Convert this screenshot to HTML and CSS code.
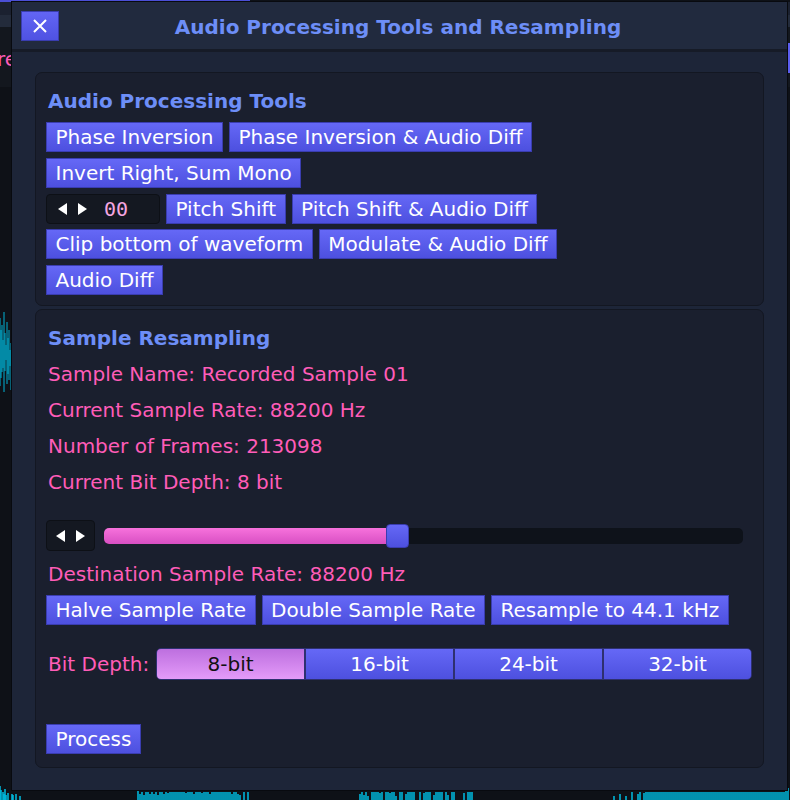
FILE: index.html
```html
<!DOCTYPE html>
<html>
<head>
<meta charset="utf-8">
<link rel="stylesheet" href="styles.css">
</head>
<body>
<div class="backdrop">
  <div class="bd-topline"></div>
  <div class="bd-strip1"></div>
  <div class="bd-strip2"></div>
  <div class="bd-head"><span class="bd-text">re</span></div>
  <div class="bd-side-btn"></div>
  <svg class="bd-wave" width="790" height="800" viewBox="0 0 790 800">
    <path d="M0 318V386 M1 330V378 M2 325V372 M3 340V368 M4 312V392 M5 333V371 M6 345V360 M7 322V384 M8 338V374 M9 330V380 M10 350V366 M11 343V390" stroke="#00b3d6" stroke-width="1"/>
    <path d="M0 786V800 M1 790V800 M3 792V800 M4 794V800 M5 789V800 M6 795V800 M8 793V800 M12 794V800 M13 795V800 M16 794V800 M20 796V800 M138 791V800 M140 794V800 M142 792V800 M144 795V800 M146 792V800 M148 792V800 M150 794V800 M152 792V800 M154 794V800 M156 792V800 M158 795V800 M160 792V800 M162 792V800 M164 794V800 M166 792V800 M168 793V800 M170 792V800 M172 792V800 M174 792V800 M176 792V800 M178 792V800 M180 792V800 M182 792V800 M184 792V800 M186 793V800 M188 792V800 M190 792V800 M192 792V800 M194 794V800 M196 792V800 M198 792V800 M200 792V800 M202 793V800 M204 792V800 M206 792V800 M208 792V800 M210 794V800 M212 792V800 M214 792V800 M216 792V800 M218 792V800 M220 792V800 M222 792V800 M224 792V800 M226 792V800 M228 792V800 M230 792V800 M232 794V800 M234 792V800 M236 792V800 M238 794V800 M240 795V800 M244 792V800 M248 792V800 M360 794V800 M362 792V800 M364 795V800 M366 792V800 M368 796V800 M372 792V800 M374 792V800 M376 792V800 M378 792V800 M380 793V800 M382 792V800 M386 792V800 M388 792V800 M390 793V800 M392 792V800 M394 792V800 M396 796V800 M400 792V800 M402 792V800 M406 794V800 M408 792V800 M410 792V800 M412 792V800 M414 792V800 M420 792V800 M424 793V800 M426 792V800 M428 792V800 M430 792V800 M434 795V800 M436 792V800 M438 792V800 M440 792V800 M442 792V800 M446 792V800 M448 795V800 M452 792V800 M454 792V800 M464 793V800 M468 792V800 M470 792V800 M472 792V800 M614 796V800 M620 794V800 M626 796V800 M632 792V800 M638 794V800 M640 792V800 M644 793V800 M646 792V800 M648 792V800 M650 792V800 M652 792V800 M654 792V800 M656 792V800 M658 792V800 M660 792V800 M662 792V800 M664 792V800 M666 792V800 M668 792V800 M670 792V800 M672 792V800 M674 792V800 M676 792V800 M678 792V800 M680 792V800 M682 792V800 M684 792V800 M686 792V800 M688 792V800 M690 792V800 M692 792V800 M694 792V800 M696 792V800 M698 792V800 M700 792V800 M702 792V800 M704 792V800 M706 792V800 M708 792V800 M710 792V800 M712 792V800 M714 792V800 M716 792V800 M718 792V800 M720 792V800 M722 792V800 M724 792V800 M726 792V800 M728 792V800 M730 792V800 M732 792V800 M734 792V800 M736 792V800 M738 792V800 M740 792V800 M742 792V800 M744 792V800 M746 792V800 M748 792V800 M750 792V800 M752 792V800 M754 792V800 M756 792V800 M758 792V800 M760 792V800 M762 792V800 M764 792V800 M766 792V800 M768 792V800 M770 792V800 M772 792V800 M774 792V800 M776 792V800 M778 792V800 M780 792V800 M782 792V800 M784 792V800 M786 790V800 M788 788V800" stroke="#00b3d6" stroke-width="1.6"/>
  </svg>
</div>

<div class="window">
  <div class="titlebar">
    <button class="close" aria-label="Close">
      <svg width="16" height="16" viewBox="0 0 16 16"><path d="M2 2L14 14M14 2L2 14" stroke="#fff" stroke-width="2" fill="none"/></svg>
    </button>
    <div class="title">Audio Processing Tools and Resampling</div>
  </div>
  <div class="wbody">
    <section class="panel tools">
      <h2 class="heading">Audio Processing Tools</h2>
      <div class="rows">
        <div class="row"><button class="btn">Phase Inversion</button><button class="btn">Phase Inversion &amp; Audio Diff</button></div>
        <div class="row"><button class="btn">Invert Right, Sum Mono</button></div>
        <div class="row">
          <div class="numbox">
            <span class="arrows"><span class="tri-l"></span><span class="tri-r"></span></span>
            <span class="num">00</span>
          </div>
          <button class="btn">Pitch Shift</button><button class="btn">Pitch Shift &amp; Audio Diff</button>
        </div>
        <div class="row"><button class="btn">Clip bottom of waveform</button><button class="btn">Modulate &amp; Audio Diff</button></div>
        <div class="row"><button class="btn">Audio Diff</button></div>
      </div>
    </section>
    <section class="panel resample">
      <h2 class="heading line">Sample Resampling</h2>
      <p class="info line">Sample Name: Recorded Sample 01</p>
      <p class="info line">Current Sample Rate: 88200 Hz</p>
      <p class="info line">Number of Frames: 213098</p>
      <p class="info line">Current Bit Depth: 8 bit</p>
      <div class="slider-row">
        <div class="arrowbox"><span class="tri-l"></span><span class="tri-r"></span></div>
        <div class="track">
          <div class="fill" style="width: 45.9%"></div>
          <div class="thumb" style="left: 45.9%"></div>
        </div>
      </div>
      <p class="info line dest">Destination Sample Rate: 88200 Hz</p>
      <div class="row"><button class="btn">Halve Sample Rate</button><button class="btn">Double Sample Rate</button><button class="btn">Resample to 44.1 kHz</button></div>
      <div class="bitrow">
        <span class="info">Bit Depth:</span>
        <div class="seg">
          <button class="seg-item active">8-bit</button>
          <button class="seg-item">16-bit</button>
          <button class="seg-item">24-bit</button>
          <button class="seg-item">32-bit</button>
        </div>
      </div>
      <div class="row process-row"><button class="btn">Process</button></div>
    </section>
  </div>
</div>
</body>
</html>
```

FILE: styles.css
```css
* { box-sizing: border-box; }
html, body { margin: 0; padding: 0; }
body {
  width: 790px;
  height: 800px;
  background: #0e1117;
  font-family: "DejaVu Sans", sans-serif;
  position: relative;
  overflow: hidden;
}

/* backdrop app (behind modal) */
.backdrop { position: absolute; inset: 0; }
.bd-topline { height: 2px; width: 250px; background: #4b4fd6; }
.bd-strip1 { height: 13px; background: #1b2130; }
.bd-strip2 { height: 12px; background: #232b3b; }
.bd-head {
  height: 60px;
  background: #13171e;
  padding-top: 20px;
}
.bd-text { color: #ff5cb8; font-size: 20px; margin-left: -3px; }
.bd-side-btn {
  position: absolute;
  right: 0; top: 43px;
  width: 6px; height: 30px;
  background: #5b5ef0;
}
.bd-wave { position: absolute; left: 0; top: 0; }

/* modal window */
.window {
  position: absolute;
  left: 11px; top: 1px;
  width: 777px; height: 790px;
  border: 1px solid #080a0f;
  background: #1d2538;
  display: flex;
  flex-direction: column;
}
.titlebar {
  height: 50px;
  flex: none;
  background: #212a3e;
  border-bottom: 3px solid #161b27;
  display: grid;
  grid-template-columns: 1fr auto 1fr;
  align-items: center;
  padding-left: 9px;
}
.close {
  justify-self: start;
  width: 38px; height: 30px;
  border: 1px solid #3a3db0;
  background: linear-gradient(#6265f4, #4f52e2);
  display: flex; align-items: center; justify-content: center;
  padding: 0;
}
.title {
  color: #6d8ef7;
  font-weight: bold;
  font-size: 20px;
  margin-top: 2px;
  margin-left: -12px;
}
.wbody {
  flex: 1;
  padding: 20px 23px 22px 23px;
  display: flex;
  flex-direction: column;
  gap: 3px;
}
.panel {
  background: #1a1f2e;
  border: 1px solid #131722;
  border-radius: 7px;
  padding: 0 10px;
}
.heading {
  margin: 0;
  color: #6d8ef7;
  font-size: 20px;
  font-weight: bold;
  padding-left: 2px;
}
.tools { padding-top: 16px; padding-bottom: 10px; }
.tools .heading { line-height: 24px; margin-bottom: 9px; }
.rows { display: flex; flex-direction: column; gap: 5.75px; }
.row { display: flex; gap: 6px; }
.btn {
  height: 30px;
  padding: 0 8.5px;
  border: 1px solid #3a3db0;
  background: linear-gradient(#6568f6, #4d50df);
  color: #fff;
  font-family: "DejaVu Sans", sans-serif;
  font-size: 20px;
  line-height: 28px;
  white-space: nowrap;
}
.numbox {
  width: 114px; height: 30px;
  background: #141821;
  border: 1px solid #0d1016;
  border-radius: 4px;
  display: flex; align-items: center;
  padding-left: 11px;
}
.arrows { display: flex; gap: 11px; align-items: center; }
.tri-l, .tri-r { width: 0; height: 0; border-top: 6px solid transparent; border-bottom: 6px solid transparent; }
.tri-l { border-right: 9px solid #fff; }
.tri-r { border-left: 9px solid #fff; }
.num {
  margin-left: 17px;
  color: #f4a6e0;
  font-family: "DejaVu Sans Mono", monospace;
  font-size: 20px;
}

.resample { flex: 1; padding-top: 10px; display: flex; flex-direction: column; }
.line { line-height: 36px; margin: 0; }
.info {
  margin: 0;
  color: #ff5cb8;
  font-size: 20px;
  padding-left: 2px;
}
.slider-row {
  display: flex; align-items: center;
  margin-top: 20px;
  gap: 9px;
  padding-right: 10px;
}
.arrowbox {
  width: 49px; height: 31px;
  background: #141821;
  border: 1px solid #0d1016;
  border-radius: 4px;
  display: flex; align-items: center; justify-content: center; gap: 11px;
}
.track {
  flex: 1;
  height: 16px;
  background: #0e121a;
  border-radius: 5px;
  position: relative;
}
.fill {
  height: 16px;
  border-radius: 5px 0 0 5px;
  background: linear-gradient(#f772dc, #d84fc3);
}
.thumb {
  position: absolute;
  top: -4px;
  width: 23px; height: 24px;
  margin-left: -11px;
  border-radius: 4px;
  border: 1px solid #3a3db0;
  background: linear-gradient(#6568f6, #4d50df);
}
.dest { margin-top: 5px; }
.resample > .row { margin-top: 3px; }
.bitrow {
  display: flex; align-items: center;
  margin-top: 23px;
  gap: 7px;
  padding-right: 1px;
}
.seg {
  flex: 1;
  display: flex;
  height: 32px;
  border: 1px solid #2e3070;
  border-radius: 5px;
  overflow: hidden;
  background: #2e3070;
  gap: 2px;
}
.seg-item {
  flex: 1;
  border: 0;
  padding: 0;
  background: linear-gradient(#6568f6, #4d50df);
  color: #fff;
  font-family: "DejaVu Sans", sans-serif;
  font-size: 20px;
}
.seg-item.active {
  background: linear-gradient(#bd6fdf, #e49bf9);
  color: #111;
}
.process-row { margin-top: 44px !important; }
```
